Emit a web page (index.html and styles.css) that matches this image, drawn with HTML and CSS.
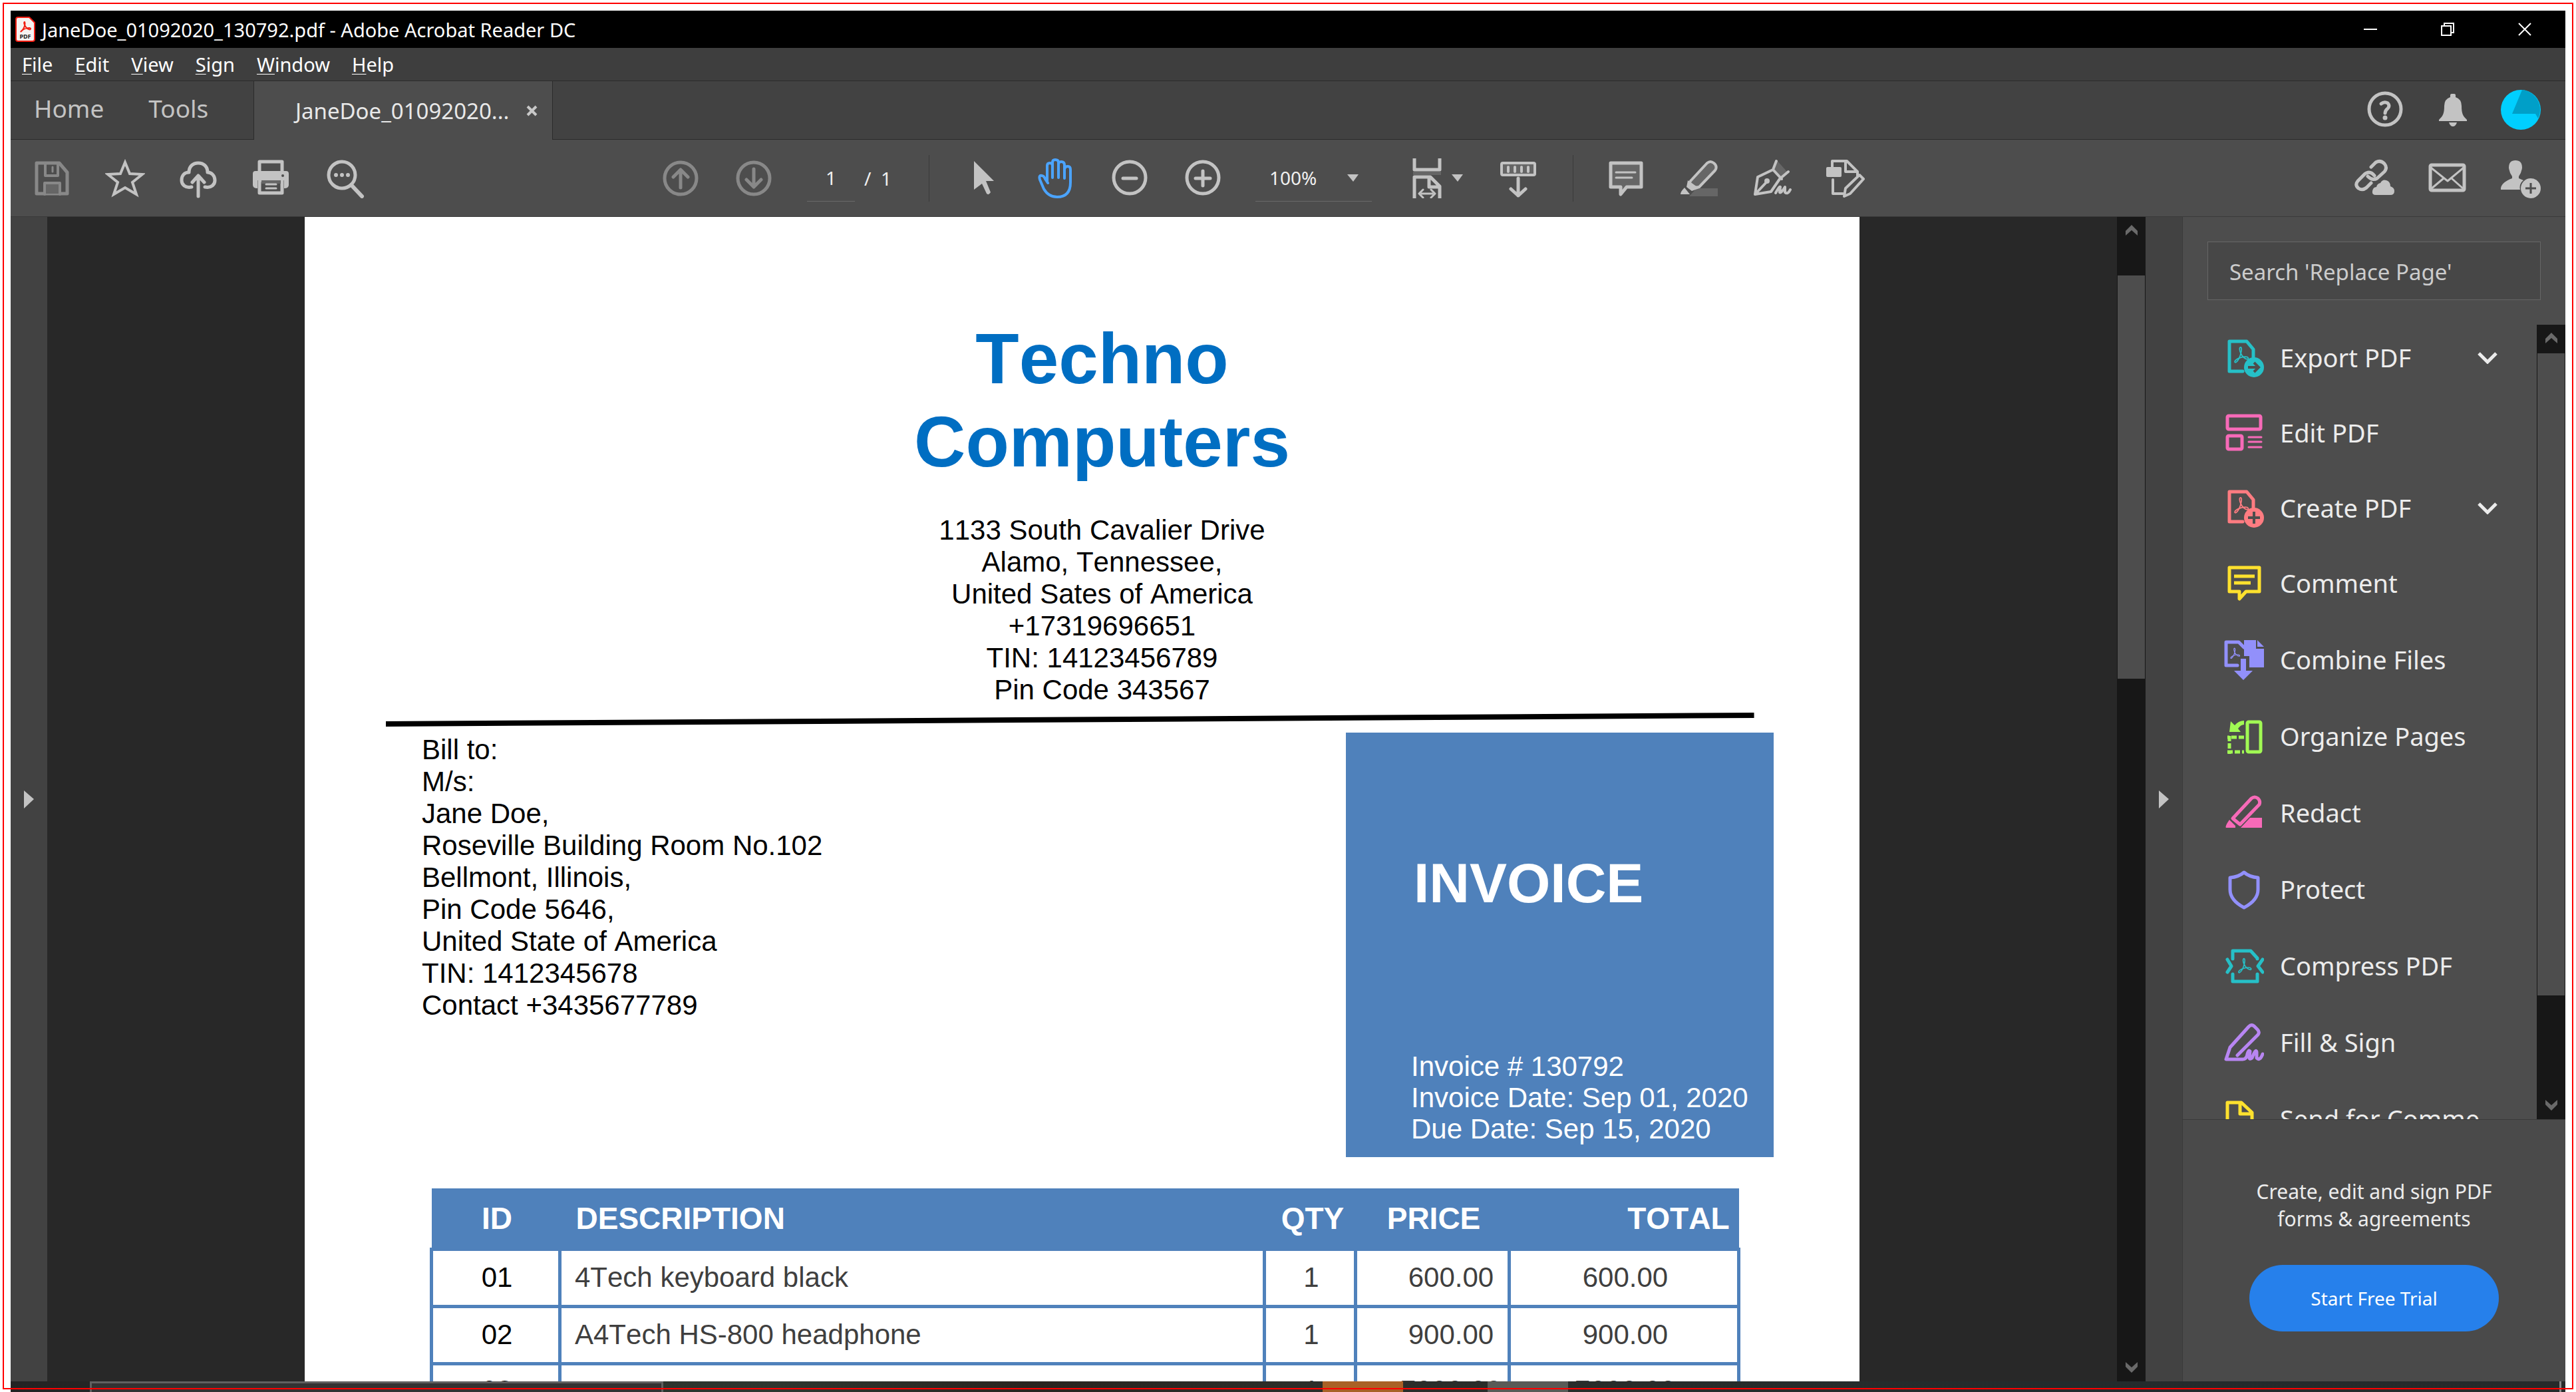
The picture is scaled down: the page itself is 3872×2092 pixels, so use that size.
FILE: index.html
```html
<!DOCTYPE html>
<html lang="en">
<head>
<meta charset="utf-8">
<title>JaneDoe_01092020_130792.pdf - Adobe Acrobat Reader DC</title>
<link rel="stylesheet" href="styles.css">
</head>
<body>
<svg class="symbols" aria-hidden="true">
  <symbol id="acro" viewBox="0 0 26 30">
    <path d="M12 2C9 2 10 8 12 12C14 17 19 22 23 22C26 22 25 18 20 18C13 18 3 22 2 26C2 29 6 27 9 21C12 15 15 3 12 2Z" fill="none" stroke="currentColor" stroke-width="2"/>
  </symbol>
  <symbol id="chev-up" viewBox="0 0 18 16"><path d="M0 16V9L9 0L18 9V16L9 8Z" fill="currentColor"/></symbol>
  <symbol id="chev-down" viewBox="0 0 18 16"><path d="M0 0V7L9 16L18 7V0L9 8Z" fill="currentColor"/></symbol>
</svg>

<div class="app">
  <header class="titlebar">
    <svg class="app-icon" viewBox="0 0 30 38"><path d="M4 1H21L29 9V34Q29 37 26 37H4Q1 37 1 34V4Q1 1 4 1Z" fill="#f6f2f2" stroke="#f21d12" stroke-width="2"/><path d="M14 8c-2 0 0 6 3 9s6 3 6 1s-8-1-12 2s-3 3-1 1s6-9 4-13z" fill="none" stroke="#f21d12" stroke-width="2"/><text x="15" y="33" text-anchor="middle" class="app-icon-text">PDF</text></svg>
    <span class="title">JaneDoe_01092020_130792.pdf - Adobe Acrobat Reader DC</span>
    <div class="window-buttons">
      <button type="button" aria-label="Minimize"><svg viewBox="0 0 20 20"><path d="M0 10H20"/></svg></button>
      <button type="button" aria-label="Restore"><svg viewBox="0 0 20 20"><path d="M1 5H15V19H1ZM5 5V1H19V15H15"/></svg></button>
      <button type="button" aria-label="Close"><svg viewBox="0 0 20 20"><path d="M1 1L19 19M19 1L1 19"/></svg></button>
    </div>
  </header>

  <nav class="menubar">
    <button type="button"><u>F</u>ile</button>
    <button type="button"><u>E</u>dit</button>
    <button type="button"><u>V</u>iew</button>
    <button type="button"><u>S</u>ign</button>
    <button type="button"><u>W</u>indow</button>
    <button type="button"><u>H</u>elp</button>
  </nav>

  <div class="tabbar">
    <div class="main-tabs">
      <button type="button">Home</button>
      <button type="button">Tools</button>
    </div>
    <div class="doc-tab">
      <span>JaneDoe_01092020...</span>
      <button type="button" aria-label="Close tab"><svg class="tab-close" viewBox="0 0 17 17"><path d="M2 2L15 15M15 2L2 15"/></svg></button>
    </div>
    <div class="account">
      <button type="button" aria-label="Help"><svg class="icon" viewBox="0 0 60 60"><circle cx="30" cy="29" r="24" class="s5"/><path d="M24 21Q29 17 34 20Q38 24 34 28Q30 31 30 35" class="s5"/><circle cx="30" cy="42" r="3.500" class="f"/></svg></button>
      <button type="button" aria-label="Notifications"><svg class="icon" viewBox="0 0 60 60"><path d="M26 11V8Q26 6 28 6H32Q34 6 34 8V11Q43 14 43 24C43 36 45 39 51 45V47H9V45C15 39 17 36 17 24Q17 14 26 11ZM24 49H36Q34 55 30 55Q26 55 24 49Z" class="f"/></svg></button>
      <button type="button" aria-label="Account"><svg class="icon" viewBox="0 0 60 60"><circle cx="30" cy="30" r="30" fill="#00cfff"/><path d="M32 0L17 36H52L56 43A30 30 0 0 0 32 0Z" fill="#009fc8"/></svg></button>
    </div>
  </div>

  <div class="toolbar">
    <div class="tool-group">
      <button type="button" class="dim" aria-label="Save"><svg class="icon" viewBox="0 0 60 60"><path d="M7 7H41L53 21V53H7Z" class="s5"/><path d="M20 7V26H39V7" class="s4"/><path d="M31 13V20" class="s3"/><rect x="19" y="37" width="23" height="16" fill="#666"/><path d="M19 54V37H42V54" class="s4"/></svg></button>
      <button type="button" aria-label="Star"><svg class="icon" viewBox="0 0 60 60"><path d="M30 6L37 23L56 24L41 36L47 54L30 44L13 54L19 36L4 24L23 23Z" class="s4 miter"/></svg></button>
      <button type="button" aria-label="Upload"><svg class="icon" viewBox="0 0 60 60"><path d="M20 43C10 45 5 39 5 33C5 25 10 21 16 21C16 12 22 7 30 7C38 7 44 12 44 21C50 21 55 26 55 33C55 39 50 45 40 43M30 57V28M21 36L30 26L39 36" class="s5"/></svg></button>
      <button type="button" aria-label="Print"><svg class="icon" viewBox="0 0 60 60"><path d="M12 20V5H46V20" class="s5"/><path d="M6 19H52Q56 19 56 23V40Q56 45 49 45V33H9V45Q2 45 2 40V23Q2 19 6 19Z" class="f"/><path d="M12 33V52H46V33Z" class="s5"/><rect x="15" y="33" width="29" height="5" fill="#666"/><path d="M22 39H37M22 45H37" class="s3"/><circle cx="47" cy="26" r="2" fill="#4d4d4d"/></svg></button>
      <button type="button" aria-label="Find"><svg class="icon" viewBox="0 0 60 60"><circle cx="26" cy="25" r="20" class="s5"/><path d="M40 40L56 57" class="s6"/><circle cx="17" cy="25" r="3" class="f"/><circle cx="26" cy="25" r="3" class="f"/><circle cx="35" cy="25" r="3" class="f"/></svg></button>
    </div>

    <div class="tool-group view-tools">
      <button type="button" class="dim" aria-label="Previous page"><svg class="icon" viewBox="0 0 60 60"><circle cx="30" cy="30" r="24" class="s5"/><path d="M30 44V18M19 28L30 17L41 28" class="s5"/></svg></button>
      <button type="button" class="dim" aria-label="Next page"><svg class="icon" viewBox="0 0 60 60"><circle cx="30" cy="30" r="24" class="s5"/><path d="M30 16V42M19 32L30 43L41 32" class="s5"/></svg></button>
      <input class="page-number" type="text" value="1" aria-label="Page number">
      <span class="page-count">/&nbsp; 1</span>
      <span class="divider"></span>
      <button type="button" aria-label="Select"><svg class="icon" viewBox="0 0 60 60"><path d="M16 4L46 34H34L41 51Q38 56 35 53L28 38L16 47Z" class="f"/></svg></button>
      <button type="button" class="active" aria-label="Hand"><svg class="icon" viewBox="0 0 60 60"><path d="M16 35V11Q16 7 20 7Q24 7 24 11V6Q24 2 28 2Q33 2 33 6V9Q33 5 37 5Q42 5 42 10V16Q43 12 47 12Q51 12 51 17V36Q51 58 31 58Q18 58 11 46L5 32Q3 25 8 26Q11 26 13 31L17 37M24 10V29M33 8V29M42 14V30" class="s4"/></svg></button>
      <button type="button" aria-label="Zoom out"><svg class="icon" viewBox="0 0 60 60"><circle cx="30" cy="29" r="24" class="s5"/><path d="M20 30H40" class="s5"/></svg></button>
      <button type="button" aria-label="Zoom in"><svg class="icon" viewBox="0 0 60 60"><circle cx="30" cy="29" r="24" class="s5"/><path d="M19 30H41M30 19V41" class="s5"/></svg></button>
      <label class="zoom">
        <select aria-label="Zoom level"><option>100%</option></select>
        <svg viewBox="0 0 17 11"><path d="M0 0H17L9 11Z" class="f"/></svg>
      </label>
      <button type="button" class="fit" aria-label="Fit width">
        <svg class="icon" viewBox="0 0 60 60"><path d="M11 0V17H49V0" class="s5"/><rect x="9" y="20" width="42" height="5" fill="#666"/><path d="M11 60V28H35L49 42V60M33 28V43H48" class="s5"/><path d="M22 53H38M24 47L18 53L24 59M36 47L42 53L36 59" class="s3"/></svg>
        <svg class="caret" viewBox="0 0 17 11"><path d="M0 0H17L9 11Z" class="f"/></svg>
      </button>
      <button type="button" aria-label="Scroll mode"><svg class="icon" viewBox="0 0 60 60"><rect x="5" y="7" width="50" height="18" rx="2" class="s4 shade"/><path d="M15 13V20M25 13V20M35 13V20M45 13V20" class="s4"/><path d="M30 30V56M19 46L30 56L41 46" class="s5"/></svg></button>
      <span class="divider short"></span>
      <button type="button" aria-label="Comment"><svg class="icon" viewBox="0 0 60 60"><path d="M7 7H53V43H31L22 54V43H7Z" class="s5 shade"/><path d="M15 21H44M15 29H39" class="s3"/></svg></button>
      <button type="button" aria-label="Highlight"><svg class="icon" viewBox="0 0 60 60"><path d="M15 57L26 45H58V57Z" fill="#666"/><path d="M17 34L42 7Q47 3 52 7Q58 12 54 18L30 43L22 44L15 39Z" class="s4 shade"/><path d="M13 33L30 45L19 49L11 43ZM8 44L16 54H2Q2 50 8 44Z" class="f"/></svg></button>
      <button type="button" aria-label="Sign"><svg class="icon" viewBox="0 0 60 60"><path d="M36 2L52 20L42 28L31 18Z" fill="#666"/><path d="M36 4L31 17L8 28L4 54L28 50L41 31L54 20M31 17L44 31M5 53L20 37" class="s4"/><circle cx="22" cy="34" r="4" class="f"/><path d="M35 52Q41 41 42 43L41 51Q43 53 49 43L49 51Q53 55 57 47" class="s4"/></svg></button>
      <button type="button" aria-label="Edit"><svg class="icon" viewBox="0 0 60 60"><path d="M10 14V4H32L48 20V26M30 4V20H48M11 32V53H26" class="s4"/><rect x="1" y="13" width="23" height="15" rx="2" class="f"/><path d="M30 45L51 25L57 31L37 53L28 57Z" class="s4"/></svg></button>
    </div>

    <div class="tool-group share-tools">
      <button type="button" aria-label="Share link"><svg class="icon" viewBox="0 0 60 60"><path d="M25 13L32 6Q39 2 45 8Q50 14 45 20L34 30Q27 34 20 27M30 26Q24 18 16 23L5 34Q0 40 6 45Q12 49 18 44L25 37" class="s5"/><path d="M32 55Q26 55 27 49Q28 43 33 43Q34 38 39 37Q42 31 48 33Q54 35 54 42Q60 44 60 49Q60 55 54 55Z" class="f"/></svg></button>
      <button type="button" aria-label="Email"><svg class="icon" viewBox="0 0 60 60"><rect x="4" y="10" width="51" height="38" rx="2" class="s5"/><path d="M5 14L30 34L54 14M5 46L24 30M54 46L36 30" class="s3"/></svg></button>
      <button type="button" aria-label="Add person"><svg class="icon" viewBox="0 0 60 60"><path d="M12 14Q12 3 22 3Q32 3 32 14Q31 22 27 27V30L34 33Q27 38 29 47H0Q-1 37 17 30V27Q13 22 12 14Z" class="f"/><circle cx="45" cy="45" r="15" class="f"/><path d="M37 45H53M45 37V53" stroke="#4d4d4d" stroke-width="3"/></svg></button>
    </div>
  </div>

  <main class="workspace">
    <button type="button" class="rail" aria-label="Show navigation"><svg viewBox="0 0 15 27"><path d="M0 0L15 13L0 27Z" class="f"/></svg></button>

    <section class="canvas">
      <article class="page">
        <header class="company">
          <h1>Techno<br>Computers</h1>
          <address>1133 South Cavalier Drive<br>Alamo, Tennessee,<br>United Sates of America<br>+17319696651<br>TIN: 14123456789<br>Pin Code 343567</address>
        </header>
        <svg class="rule" viewBox="0 0 2056 21" preserveAspectRatio="none"><path d="M0 17L2056 4" stroke="#000" stroke-width="8"/></svg>
        <div class="billing">
          <p class="bill-to">Bill to:<br>M/s:<br>Jane Doe,<br>Roseville Building Room No.102<br>Bellmont, Illinois,<br>Pin Code 5646,<br>United State of America<br>TIN: 1412345678<br>Contact +3435677789</p>
          <div class="invoice-box">
            <h2>INVOICE</h2>
            <p>Invoice # 130792<br>Invoice Date: Sep 01, 2020<br>Due Date: Sep 15, 2020</p>
          </div>
        </div>
        <table class="items">
          <colgroup><col class="c-id"><col><col class="c-qty"><col class="c-price"><col class="c-total"></colgroup>
          <thead>
            <tr><th>ID</th><th class="desc">DESCRIPTION</th><th class="qty">QTY</th><th>PRICE</th><th class="total">TOTAL</th></tr>
          </thead>
          <tbody>
            <tr><td class="id">01</td><td class="desc">4Tech keyboard black</td><td>1</td><td class="price">600.00</td><td>600.00</td></tr>
            <tr><td class="id">02</td><td class="desc">A4Tech HS-800 headphone</td><td>1</td><td class="price">900.00</td><td>900.00</td></tr>
            <tr><td class="id">03</td><td class="desc"></td><td>1</td><td class="price">7000.00</td><td>7000.00</td></tr>
          </tbody>
        </table>
      </article>
    </section>

    <div class="scrollbar doc-scroll">
      <svg class="up"><use href="#chev-up"/></svg>
      <div class="thumb"></div>
      <svg class="down"><use href="#chev-down"/></svg>
    </div>

    <button type="button" class="rail" aria-label="Hide tools"><svg viewBox="0 0 15 27"><path d="M0 0L15 13L0 27Z" class="f"/></svg></button>

    <aside class="sidebar">
      <input class="search" type="text" placeholder="Search 'Replace Page'" aria-label="Search tools">
      <div class="tools">
        <div class="tool-list">
          <button type="button" class="teal"><svg class="icon" viewBox="0 0 60 60"><path d="M28 50H8V5H34L44 17V29" class="s5"/><use href="#acro" x="14" y="12" width="24" height="27"/><circle cx="45" cy="44" r="15" class="f"/><path d="M36 44H50M45 37L52 44L45 51" stroke="#4d4d4d" stroke-width="4" fill="none"/></svg><span>Export PDF</span><svg class="expand" viewBox="0 0 30 18"><path d="M2 2L15 15L28 2"/></svg></button>
          <button type="button" class="pink"><svg class="icon" viewBox="0 0 60 60"><rect x="5" y="4" width="50" height="20" rx="2" class="s5"/><rect x="5" y="34" width="22" height="20" rx="2" class="s5"/><path d="M37 36H56M37 43H56M37 51H56" class="s3"/></svg><span>Edit PDF</span></button>
          <button type="button" class="coral"><svg class="icon" viewBox="0 0 60 60"><path d="M28 50H8V5H34L44 17V29" class="s5"/><use href="#acro" x="14" y="12" width="24" height="27"/><circle cx="45" cy="44" r="15" class="f"/><path d="M36 44H54M45 35V53" stroke="#4d4d4d" stroke-width="4"/></svg><span>Create PDF</span><svg class="expand" viewBox="0 0 30 18"><path d="M2 2L15 15L28 2"/></svg></button>
          <button type="button" class="yellow"><svg class="icon" viewBox="0 0 60 60"><path d="M8 6H53V42H33L23 53V42H8Z" class="s5"/><path d="M15 19H46M15 29H40" class="s5 butt"/></svg><span>Comment</span></button>
          <button type="button" class="violet"><svg class="icon" viewBox="0 0 60 60"><path d="M20 38H3V3H22L30 11" class="s5"/><use href="#acro" x="7" y="11" width="19" height="18"/><path d="M30 0H48V13H60V41H38V24H30ZM50 0L60 10H50ZM25 28H33V46H43L29 60L15 46H25Z" class="f"/></svg><span>Combine Files</span></button>
          <button type="button" class="green"><svg class="icon" viewBox="0 0 60 60"><rect x="35" y="8" width="20" height="45" rx="2" class="s5"/><path d="M30 6Q22 6 16 13L10 7L8 23H25L21 18Q25 12 30 12Z" class="f"/><path d="M30 31H5M8 29V56M5 53H30" class="s5 dashed"/></svg><span>Organize Pages</span></button>
          <button type="button" class="pink"><svg class="icon" viewBox="0 0 60 60"><path d="M13 38L41 8Q46 4 51 8Q55 12 53 17L24 47Z" class="s5"/><path d="M8 40L17 49V52H3Q1 50 8 40ZM25 52L39 37H57V52Z" class="f"/></svg><span>Redact</span></button>
          <button type="button" class="violet"><svg class="icon" viewBox="0 0 60 60"><path d="M30 4Q38 11 51 12V30Q51 46 30 57Q9 46 9 30V12Q22 11 30 4Z" class="s5"/></svg><span>Protect</span></button>
          <button type="button" class="teal"><svg class="icon" viewBox="0 0 60 60"><path d="M13 19V7H40L50 18V19M13 42V53H50V42" class="s5"/><use href="#acro" x="18" y="17" width="26" height="25"/><path d="M5 20L11 30L5 39M58 20L51 30L58 39" class="s5"/></svg><span>Compress PDF</span></button>
          <button type="button" class="purple"><svg class="icon" viewBox="0 0 60 60"><path d="M20 49L51 18Q54 14 50 10L45 5Q41 2 37 6L9 37L3 55H28Q34 55 35 47Q37 40 39 43L38 52Q38 56 42 53Q48 38 49 44V53Q54 58 58 47" class="s5"/></svg><span>Fill &amp; Sign</span></button>
          <button type="button" class="yellow"><svg class="icon" viewBox="0 0 60 60"><path d="M5 60V5H26L42 20V30M24 5V22H40M30 34H57V60" class="s5"/></svg><span>Send for Comme</span></button>
        </div>
        <div class="scrollbar tool-scroll">
          <svg class="up"><use href="#chev-up"/></svg>
          <div class="thumb"></div>
          <svg class="down"><use href="#chev-down"/></svg>
        </div>
      </div>
      <footer class="promo">
        <p>Create, edit and sign PDF<br>forms &amp; agreements</p>
        <button type="button">Start Free Trial</button>
      </footer>
    </aside>
  </main>
</div>

<div class="taskbar">
  <span class="task-search"></span>
  <span class="task-active"></span>
  <span class="task-open"></span>
  <span class="task-edge"></span>
</div>
<div class="frame"></div>
</body>
</html>
```
FILE: styles.css
```css
* { box-sizing: border-box; }

body {
  margin: 0;
  padding: 16px 16px 0;
  height: 100vh;
  display: flex;
  flex-direction: column;
  overflow: hidden;
  background: #fff;
  color: #fff;
  font-family: "Noto Sans", "Open Sans", sans-serif;
  font-size: 29px;
}

button, input, select {
  margin: 0;
  padding: 0;
  border: 0;
  border-radius: 0;
  background: none;
  color: inherit;
  font: inherit;
}

svg { display: block; flex: none; }
.symbols { position: absolute; width: 0; height: 0; }

/* Red outline drawn over the whole window */
.frame {
  position: absolute;
  inset: 4px;
  border: 2px solid #f00;
  pointer-events: none;
}

.app {
  flex: 1;
  min-height: 0;
  display: flex;
  flex-direction: column;
  background: #4d4d4d;
}

/* Icon strokes and fills */
.icon { width: 60px; height: 60px; }
.f { fill: currentColor; }
.s3, .s4, .s5, .s6 { fill: none; stroke: currentColor; stroke-linecap: round; stroke-linejoin: round; }
.s3 { stroke-width: 3; }
.s4 { stroke-width: 4; }
.s5 { stroke-width: 5; }
.s6 { stroke-width: 6; }
.shade { fill: #666; }
.miter { stroke-linejoin: miter; }
.butt { stroke-linecap: butt; }
.dashed { stroke-linecap: butt; stroke-dasharray: 8 3; }

/* Title bar */
.titlebar {
  display: flex;
  align-items: center;
  height: 56px;
  padding: 0 3px 0 7px;
  background: #000;
}
.app-icon { width: 30px; height: 38px; }
.app-icon-text { font: bold 9px "Noto Sans", sans-serif; fill: #222; }
.title { margin-left: 10px; white-space: nowrap; }
.window-buttons { display: flex; margin-left: auto; }
.window-buttons button { width: 116px; height: 54px; display: grid; place-items: center; }
.window-buttons svg { width: 20px; height: 20px; fill: none; stroke: #fff; stroke-width: 2; }

/* Menu bar */
.menubar {
  display: flex;
  align-items: center;
  gap: 33px;
  height: 50px;
  padding-left: 17px;
  background: #3e3e3e;
  border-bottom: 1px solid #2b2b2b;
}
.menubar u { text-decoration-thickness: 1px; text-underline-offset: 3px; }

/* Tabs */
.tabbar { display: flex; height: 88px; background: #424242; }
.main-tabs {
  display: flex;
  gap: 67px;
  width: 365px;
  padding: 0 0 6px 35px;
  border-bottom: 1px solid #2b2b2b;
  color: #c3c3c3;
  font-size: 37px;
}
.doc-tab {
  display: flex;
  align-items: center;
  justify-content: space-between;
  width: 450px;
  padding: 0 22px 0 62px;
  background: #4d4d4d;
  border: solid #2b2b2b;
  border-width: 0 1px;
  color: #e8e8e8;
  font-size: 33px;
}
.tab-close { width: 17px; height: 17px; fill: none; stroke: #c8c8c8; stroke-width: 4; }
.account {
  display: flex;
  flex: 1;
  justify-content: flex-end;
  padding: 0 16px 2px 0;
  border-bottom: 1px solid #2b2b2b;
  color: #c3c3c3;
}
.account button { width: 102px; display: grid; place-items: center; }

/* Toolbar */
.toolbar {
  display: flex;
  align-items: center;
  height: 116px;
  padding: 0 12px 0 7px;
  border-bottom: 1px solid #3a3a3a;
  color: #c3c3c3;
}
.tool-group { display: flex; align-items: center; }
.tool-group button { width: 110px; height: 70px; display: flex; align-items: center; justify-content: center; }
.view-tools { margin-left: 395px; }
.share-tools { margin-left: auto; }
.dim { color: #888; }
.active { color: #4ba4ff; }
.page-number {
  width: 72px;
  height: 70px;
  margin-left: 25px;
  border-bottom: 1px solid #6a6a6a;
  color: #f0f0f0;
  font-size: 28px;
  text-align: center;
}
.page-count { width: 111px; padding-left: 14px; color: #f0f0f0; font-size: 28px; }
.divider { width: 1px; height: 70px; margin-right: 26px; background: #3a3a3a; }
.divider.short { margin: 0 24px 0 27px; }
.zoom { display: grid; align-items: center; width: 175px; height: 70px; margin: 0 40px 0 24px; border-bottom: 1px solid #6a6a6a; }
.zoom select { grid-area: 1 / 1; appearance: none; padding-left: 21px; color: #f0f0f0; font-size: 28px; }
.zoom svg { grid-area: 1 / 1; justify-self: end; width: 17px; height: 11px; margin-right: 20px; pointer-events: none; }
.tool-group .fit { gap: 7px; margin-right: 15px; }
.caret { width: 17px; height: 11px; }

/* Workspace columns */
.workspace { display: flex; flex: 1; min-height: 0; }
.rail {
  flex: none;
  width: 55px;
  display: grid;
  place-items: center;
  background: #424242;
  color: #c3c3c3;
}
.rail svg { width: 15px; height: 27px; }
.canvas {
  flex: 1;
  min-width: 0;
  display: flex;
  justify-content: center;
  overflow: hidden;
  background: #282828;
}

/* Scroll bars */
.scrollbar { display: flex; flex-direction: column; flex: none; width: 43px; background: #171717; color: #6a6a6a; }
.scrollbar svg { width: 18px; height: 16px; align-self: center; }
.up { margin-top: 12px; }
.down { margin: auto 0 13px; }
.thumb { margin: 0 1px; background: #4d4d4d; }
.doc-scroll .thumb { height: 606px; margin-top: 60px; }
.tool-scroll .thumb { height: 965px; margin-top: 15px; }

/* Document page */
.page {
  width: 100%;
  max-width: 2337px;
  padding-top: 151px;
  background: #fff;
  color: #000;
  font-family: "Liberation Sans", Arial, sans-serif;
  font-size: 42px;
  font-kerning: none;
  line-height: 48px;
}
.page p { margin: 0; }
.company { padding-left: 60px; text-align: center; }
.company h1 { margin: 0; color: #006ec2; font-size: 107px; line-height: 125px; }
.company address { margin-top: 46px; font-style: normal; }
.rule { width: 88%; height: 21px; margin: 10px 0 0 122px; }
.billing {
  display: flex;
  justify-content: space-between;
  align-items: flex-start;
  margin-top: 9px;
  padding: 0 129px 0 174px;
}
.bill-to { padding: 2px 0 0 2px; }
.invoice-box {
  display: flex;
  flex-direction: column;
  justify-content: space-between;
  width: 643px;
  height: 638px;
  padding: 179px 0 19px 98px;
  background: #4f81bb;
  color: #fff;
  line-height: 47px;
}
.invoice-box h2 { margin: 0; padding-left: 4px; font-size: 84px; line-height: 94px; }
.items {
  width: calc(100% - 367px);
  margin: 47px 0 0 188px;
  border-collapse: collapse;
  table-layout: fixed;
  color: #3f3f3f;
}
.c-id { width: 193px; }
.c-qty { width: 137px; }
.c-price { width: 231px; }
.c-total { width: 345px; }
.items th { height: 91px; padding: 2px 0 0 4px; background: #4f81bb; color: #fff; font-size: 46px; }
.items td { height: 86px; padding: 0 0 0 4px; border: 5px solid #4f81bb; text-align: center; }
.items tr:last-child td { padding-bottom: 4px; }
.items th.desc { padding-left: 24px; text-align: left; }
.items td.desc { padding-left: 20px; text-align: left; }
.items .qty { padding-left: 8px; }
.items .total { padding-right: 14px; text-align: right; }
.items .price { padding-left: 56px; }
.items .id { color: #000; }

/* Tools sidebar */
.sidebar {
  flex: none;
  display: flex;
  flex-direction: column;
  width: 576px;
  border-left: 1px solid #3a3a3a;
}
.search {
  flex: none;
  height: 88px;
  margin: 37px;
  padding: 2px 32px 0;
  border: 1px solid #666;
  background: #474747;
  font-size: 33px;
}
.search::placeholder { color: #ccc; opacity: 1; }
.tools { display: flex; flex: 1; min-height: 0; }
.tool-list {
  flex: 1;
  min-width: 0;
  padding: 20px 59px 0 62px;
  overflow: hidden;
  font-size: 38px;
}
.tool-list button {
  display: flex;
  align-items: center;
  width: 100%;
  height: 60px;
  margin-bottom: 55px;
  white-space: nowrap;
}
.tool-list button:nth-child(-n+3) { margin-bottom: 53px; }
.tool-list span { margin-left: 24px; padding-bottom: 2px; color: #ececec; }
.expand { width: 30px; height: 18px; margin-left: auto; fill: none; stroke: #ececec; stroke-width: 5; }
.teal { color: #26c0c7; }
.pink { color: #f76ab8; }
.coral { color: #ff7c81; }
.yellow { color: #ffe12e; }
.violet { color: #9290fb; }
.green { color: #a1f954; }
.purple { color: #b886f2; }

.promo {
  display: flex;
  flex-direction: column;
  align-items: center;
  padding: 87px 0 75px;
  border-top: 1px solid #3a3a3a;
  background: #4a4a4a;
  color: #ececec;
  font-size: 30px;
  line-height: 41px;
  text-align: center;
}
.promo p { margin: 0 0 49px; }
.promo button {
  width: 375px;
  height: 100px;
  border-radius: 50px;
  background: #2680eb;
  color: #fff;
  font-size: 28px;
}

/* Sliver of desktop taskbar under the window */
.taskbar { display: flex; height: 16px; background: linear-gradient(90deg, #232323, #2e372f 30%, #29241f 40%, #2c2e29 50%, #232b2c 80%, #262a2a); }
.task-search { width: 862px; margin-left: 119px; background: #333; border: solid #606060; border-width: 3px 3px 0; }
.task-active { width: 121px; margin-left: 991px; background: #a96126; }
.task-open { width: 121px; margin-left: 127px; background: #595b57; }
.task-edge { width: 3px; margin: 0 6px 0 auto; background: #8a8a8a; }
```
